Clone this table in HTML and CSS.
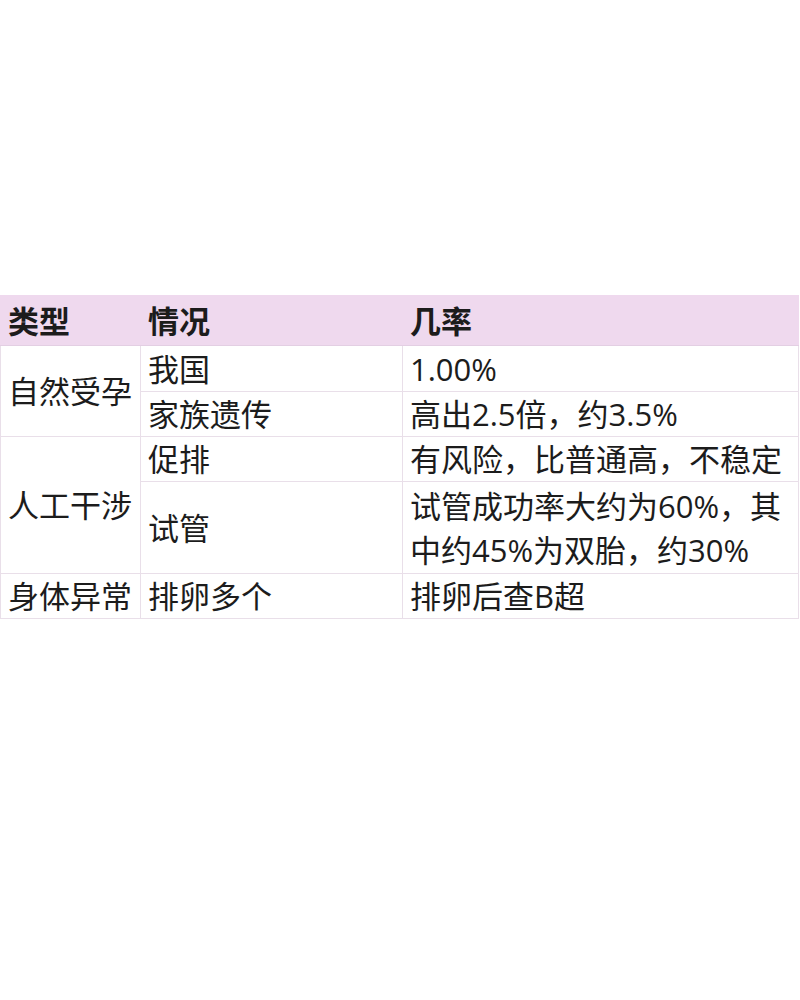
FILE: index.html
```html
<!DOCTYPE html>
<html lang="zh-CN">
<head>
<meta charset="utf-8">
<link rel="stylesheet" href="styles.css">
</head>
<body>
<div class="page">
  <table class="odds">
    <colgroup>
      <col class="c1"><col class="c2"><col class="c3">
    </colgroup>
    <thead>
      <tr class="head"><th>类型</th><th>情况</th><th>几率</th></tr>
    </thead>
    <tbody>
      <tr class="r1"><td rowspan="2">自然受孕</td><td>我国</td><td>1.00%</td></tr>
      <tr class="r"><td>家族遗传</td><td>高出2.5倍，约3.5%</td></tr>
      <tr class="r"><td rowspan="2">人工干涉</td><td>促排</td><td>有风险，比普通高，不稳定</td></tr>
      <tr class="r2"><td>试管</td><td>试管成功率大约为60%，其<br>中约45%为双胎，约30%</td></tr>
      <tr class="r"><td>身体异常</td><td>排卵多个</td><td>排卵后查B超</td></tr>
    </tbody>
  </table>
</div>
</body>
</html>
```
FILE: styles.css
```css
html, body {
  margin: 0;
  padding: 0;
  background: #ffffff;
}
.page {
  padding-top: 295px;
}
.odds {
  border-collapse: collapse;
  table-layout: fixed;
  width: 798px;
  font-family: "Open Sans", "Noto Sans CJK SC", sans-serif;
  font-size: 31px;
  color: #1c1c1c;
}
.c1 { width: 140px; }
.c2 { width: 262px; }
.c3 { width: 396px; }
.odds th, .odds td {
  border: 1.5px solid #e9dfe9;
  padding: 0 0 0 7px;
  text-align: left;
  vertical-align: middle;
  line-height: 44px;
  white-space: nowrap;
  overflow: hidden;
}
.odds th {
  background: #efd9ee;
  font-weight: 700;
  height: 49px;
  border-color: #efd9ee;
  border-bottom-color: #e3cfe3;
}
.r1 td { height: 45px; }
.r td { height: 44px; }
.r2 td { height: 91px; }
```
